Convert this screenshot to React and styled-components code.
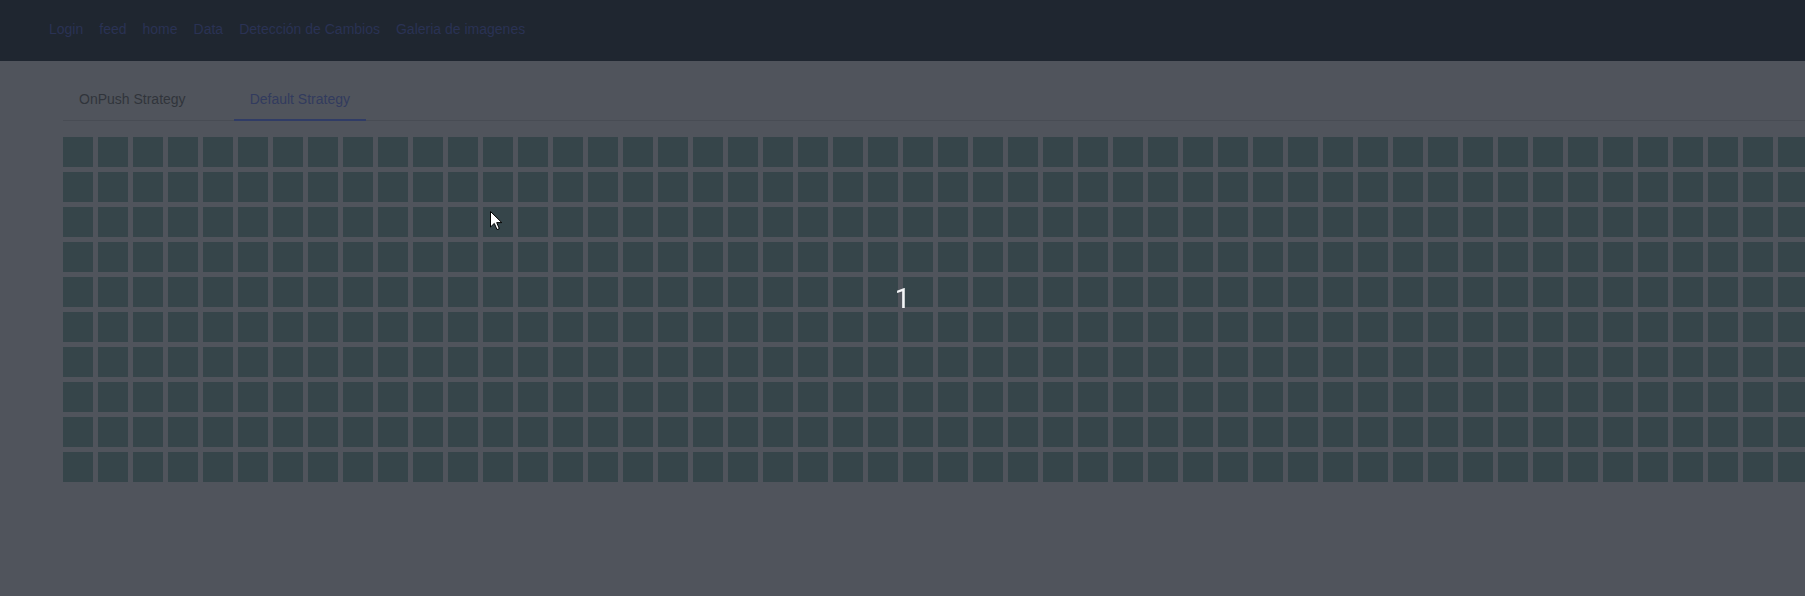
import React, { useState } from "react";
import styled, { createGlobalStyle } from "styled-components";

const GlobalStyle = createGlobalStyle`
  html, body {
    margin: 0;
    padding: 0;
    overflow: hidden;
    background: #50545c;
    font-family: "Liberation Sans", Arial, sans-serif;
  }
`;

const Nav = styled.nav`
  display: flex;
  align-items: center;
  gap: 16px;
  height: 61px;
  padding: 0 0 4px 49px;
  box-sizing: border-box;
  background: #1f2630;
`;

const NavLink = styled.a`
  font-size: 14px;
  line-height: 16px;
  color: #2a3254;
  text-decoration: none;
  white-space: nowrap;
`;

const Main = styled.main`
  padding: 13px 0 0 63px;
`;

const TabHeader = styled.div`
  display: flex;
  gap: 32px;
  height: 46px;
  border-bottom: 1px solid #484c54;
`;

const Tab = styled.div`
  position: relative;
  padding: 17px 16px 0;
  font-size: 14px;
  line-height: 16px;
  white-space: nowrap;
  color: ${(p) => (p.$active ? "#323b5e" : "#30343b")};

  &::after {
    content: "";
    display: ${(p) => (p.$active ? "block" : "none")};
    position: absolute;
    left: 0;
    right: 0;
    bottom: -1px;
    height: 2px;
    background: #303c66;
  }
`;

const Grid = styled.div`
  display: grid;
  grid-template-columns: repeat(${(p) => p.$cols}, 30px);
  grid-auto-rows: 30px;
  gap: 5px;
  margin-top: 16px;
`;

const Cell = styled.div`
  background: #36454a;
`;

const Backdrop = styled.div`
  position: fixed;
  inset: 0;
  display: flex;
  align-items: center;
  justify-content: center;
  padding-top: 2px;
  pointer-events: none;
`;

const Counter = styled.span`
  font-family: Roboto, "Liberation Sans", sans-serif;
  font-size: 28px;
  line-height: 1;
  color: #f4f6f8;
`;

const Pointer = styled.svg`
  position: fixed;
  left: 490px;
  top: 211px;
  width: 13px;
  height: 20px;
  pointer-events: none;
`;

const links = [
  "Login",
  "feed",
  "home",
  "Data",
  "Detección de Cambios",
  "Galeria de imagenes",
];

const ROWS = 10;
const COLS = 52;

const App = () => {
  const [active, setActive] = useState(1);
  const tabs = ["OnPush Strategy", "Default Strategy"];

  return (
    <>
      <GlobalStyle />
      <Nav>
        {links.map((l) => (
          <NavLink key={l} href="#">
            {l}
          </NavLink>
        ))}
      </Nav>
      <Main>
        <TabHeader>
          {tabs.map((t, i) => (
            <Tab key={t} $active={active === i} onClick={() => setActive(i)}>
              {t}
            </Tab>
          ))}
        </TabHeader>
        <Grid $cols={COLS}>
          {Array.from({ length: ROWS * COLS }).map((_, i) => (
            <Cell key={i} />
          ))}
        </Grid>
      </Main>
      <Backdrop>
        <Counter>1</Counter>
      </Backdrop>
      <Pointer viewBox="0 0 13 20">
        <path
          d="M0.5 0.5 L0.5 16 L4.3 12.4 L7 18.6 L9.3 17.6 L6.7 11.6 L11.8 11.6 Z"
          fill="#ffffff"
          stroke="#000000"
          strokeWidth="1"
          strokeLinejoin="miter"
        />
      </Pointer>
    </>
  );
};

export default App;
